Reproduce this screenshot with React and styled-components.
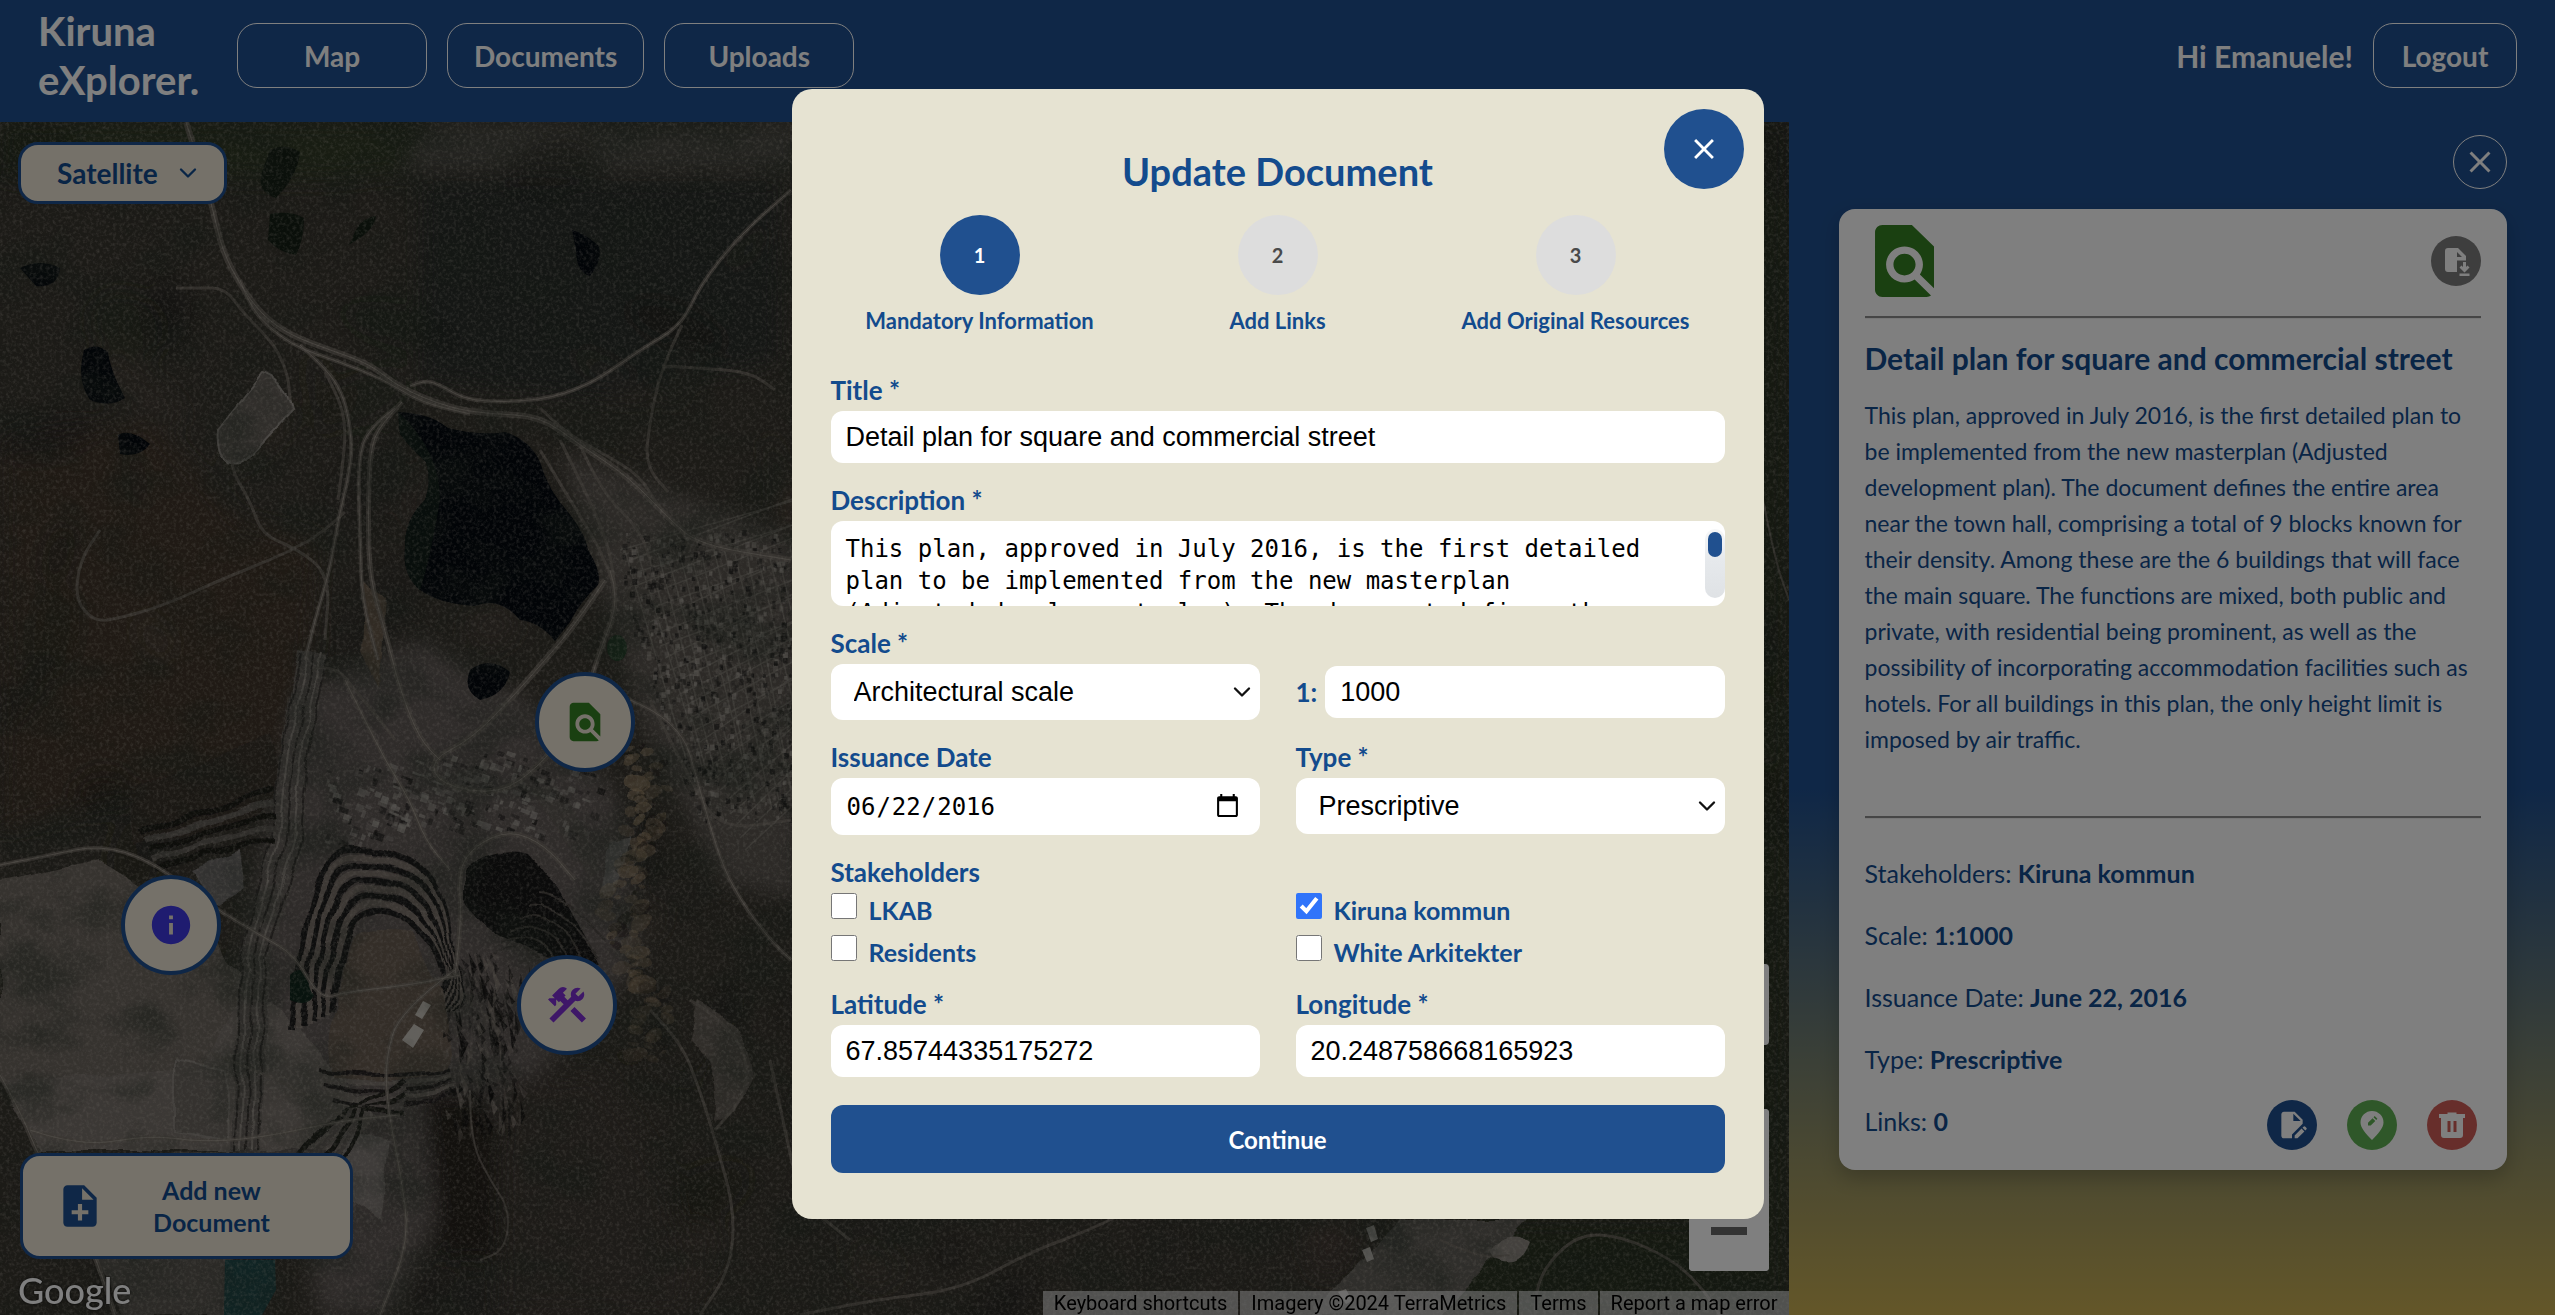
import React, { useState } from "react";
import styled, { createGlobalStyle } from "styled-components";
import {
  MdFindInPage,
  MdInfo,
  MdConstruction,
  MdNoteAdd,
  MdClose,
  MdEditDocument,
} from "react-icons/md";
import { ChevronDown } from "lucide-react";

const navy = "#1f4f8e";
const ink = "#134b8d";
const cream = "#e6e3d2";
const display = `Lato, "Liberation Sans", sans-serif`;

const GlobalStyle = createGlobalStyle`
  *, *::before, *::after { box-sizing: border-box; }
  html, body { margin: 0; height: 100%; }
  body {
    font-family: ${display};
    color: ${ink};
    overflow: hidden;
    background: linear-gradient(to bottom, #1f4f8e 60%, #c8ae52 100%);
  }
  button, input, textarea, select { font: inherit; color: inherit; }
  h1, h2, p, fieldset { margin: 0; }
`;

/* ---------- page frame ---------- */

const Page = styled.div`
  display: flex;
  flex-direction: column;
  height: 100vh;
`;

const Header = styled.header`
  flex: none;
  display: flex;
  align-items: center;
  gap: 20px;
  padding: 0 38px 11px;
  height: 122px;
  background: ${navy};
`;

const Logo = styled.a`
  width: 179px;
  color: #fff;
  font-size: 40px;
  font-weight: 700;
  line-height: 49px;
  text-decoration: none;
`;

const Nav = styled.nav`
  display: flex;
  gap: 20px;
  flex: 1;
`;

const PillButton = styled.button`
  min-width: ${(p) => (p.$compact ? "144px" : "190px")};
  height: 65px;
  padding: 0 26px;
  border: 1px solid #fff;
  border-radius: 20px;
  background: transparent;
  color: #fff;
  font-size: 28px;
  font-weight: 700;
`;

const Greeting = styled.span`
  color: #fff;
  font-size: 30px;
  font-weight: 700;
`;

const Main = styled.main`
  flex: 1;
  min-height: 0;
  display: flex;
`;

/* ---------- map ---------- */

const MapPane = styled.section`
  position: relative;
  flex: 0 0 70%;
  overflow: hidden;
  background: #34342f;
`;

const MapArt = styled.svg`
  display: block;
  width: 100%;
  height: 100%;
`;

const LayerButton = styled.button`
  position: absolute;
  left: 18px;
  top: 20px;
  display: flex;
  align-items: center;
  gap: 16px;
  height: 62px;
  padding: 0 22px 0 36px;
  border: 3px solid ${navy};
  border-radius: 20px;
  background: #ebe3d3;
  color: ${ink};
  font-size: 28px;
  font-weight: 700;
`;

const AddButton = styled.button`
  position: absolute;
  left: 20px;
  bottom: 56px;
  display: grid;
  grid-template-columns: 50px 1fr;
  align-items: center;
  width: 333px;
  height: 106px;
  padding: 0 58px 0 32px;
  border: 3px solid ${navy};
  border-radius: 20px;
  background: #ebe3d3;
  color: ${navy};
  font-size: 25px;
  font-weight: 700;
  line-height: 32px;
  text-align: center;

  span {
    padding-left: 26px;
    color: ${ink};
  }
`;

const Marker = styled.button`
  position: absolute;
  left: ${(p) => p.$x}px;
  top: ${(p) => p.$y}px;
  display: grid;
  place-items: center;
  width: 100px;
  height: 100px;
  padding: 0;
  border: 4px solid ${navy};
  border-radius: 50%;
  background: #ebe3d3;
  color: ${(p) => p.$color};
  transform: translate(-50%, -50%);
`;

const GoogleLink = styled.a`
  position: absolute;
  left: 18px;
  bottom: 4px;
  color: #fff;
  font-size: 36px;
  font-weight: 500;
  line-height: 42px;
  text-decoration: none;
  text-shadow: 0 0 3px rgba(0, 0, 0, 0.8);
`;

const MapControls = styled.div`
  position: absolute;
  right: 20px;
  bottom: 44px;
  display: grid;
  gap: 64px;
`;

const ControlBox = styled.div`
  width: 80px;
  border-radius: 4px;
  background: #fff;
  overflow: hidden;
`;

const ControlButton = styled.button`
  display: grid;
  place-items: center;
  width: 80px;
  height: 81px;
  padding: 0;
  border: 0;
  background: #fff;
  color: #666;
`;

const Attribution = styled.div`
  position: absolute;
  right: 0;
  bottom: 0;
  display: flex;
  gap: 2px;
  font-family: Roboto, "Liberation Sans", sans-serif;
  font-size: 20px;
  line-height: 24px;

  a {
    padding: 0 11px;
    background: rgba(245, 245, 245, 0.58);
    color: #000;
    text-decoration: none;
    white-space: nowrap;
  }
`;

/* ---------- document panel ---------- */

const Side = styled.aside`
  flex: 1;
  min-width: 0;
  padding: 13px 48px 0 50px;
`;

const SideTop = styled.div`
  display: flex;
  justify-content: flex-end;
  margin-bottom: 20px;
`;

const SideClose = styled.button`
  display: grid;
  place-items: center;
  width: 54px;
  height: 54px;
  padding: 0;
  border: 1px solid #fff;
  border-radius: 50%;
  background: transparent;
  color: #fff;
`;

const Card = styled.article`
  padding: 0 26px 18px;
  border-radius: 16px;
  background: #fff;
  box-shadow: 0 8px 20px rgba(0, 0, 0, 0.2);
`;

const CardHead = styled.div`
  display: flex;
  align-items: center;
  justify-content: space-between;
  padding: 16px 0 19px 10px;
`;

const TypeIcon = styled.svg`
  display: block;
  width: 59px;
  height: 72px;
  fill: #358022;
`;

const RoundButton = styled.button`
  display: grid;
  place-items: center;
  width: 50px;
  height: 50px;
  padding: 0;
  border: 0;
  border-radius: 50%;
  background: ${(p) => p.$bg};
  color: #fff;
`;

const Rule = styled.hr`
  margin: 0;
  border: 0;
  border-top: 2px solid #8c8c8c;
  border-bottom: 1px solid #eee;
`;

const CardTitle = styled.h2`
  margin: 22px 0;
  font-size: 30px;
  font-weight: 700;
  line-height: 34px;
`;

const Summary = styled.p`
  margin-bottom: 59px;
  font-size: 23px;
  line-height: 36px;
`;

const Facts = styled.div`
  padding-top: 23px;
  font-size: 25px;
  line-height: 62px;
`;

const FactRow = styled.div`
  display: flex;
  align-items: center;
  justify-content: space-between;
`;

const Actions = styled.div`
  display: flex;
  gap: 30px;
  padding: 8px 4px 0 0;
`;

/* ---------- dialog ---------- */

const Overlay = styled.div`
  position: fixed;
  inset: 0;
  display: flex;
  align-items: center;
  justify-content: center;
  padding-bottom: 7px;
  background: rgba(0, 0, 0, 0.5);
`;

const Dialog = styled.form`
  position: relative;
  width: 972px;
  max-width: 96vw;
  padding: 56px 39px 46px;
  border-radius: 20px;
  background: ${cream};
`;

const DialogClose = styled.button`
  position: absolute;
  right: 20px;
  top: 20px;
  display: grid;
  place-items: center;
  width: 80px;
  height: 80px;
  padding: 0;
  border: 0;
  border-radius: 50%;
  background: #20508f;
  color: #fff;
`;

const DialogTitle = styled.h1`
  font-size: 38px;
  font-weight: 700;
  line-height: 52px;
  text-align: center;
`;

const Steps = styled.div`
  display: grid;
  grid-template-columns: repeat(3, 1fr);
  margin: 18px 0 38px;
`;

const Step = styled.div`
  display: grid;
  justify-items: center;
  gap: 10px;
  font-size: 22px;
  font-weight: 700;
  line-height: 32px;
`;

const StepDot = styled.span`
  display: grid;
  place-items: center;
  width: 80px;
  height: 80px;
  border-radius: 50%;
  background: ${(p) => (p.$active ? "#20508f" : "#ddd")};
  color: ${(p) => (p.$active ? "#fff" : "#4a4a4a")};
  font-size: 20px;
`;

const Fields = styled.div`
  display: grid;
  grid-template-columns: 1fr 1fr;
  gap: 22px 36px;
`;

const Field = styled.div`
  grid-column: ${(p) => (p.$wide ? "1 / -1" : "auto")};
  display: flex;
  flex-direction: column;
  gap: 6px;
`;

const Label = styled.label`
  font-size: 26px;
  font-weight: 700;
  line-height: 30px;
`;

const TextInput = styled.input`
  width: 100%;
  min-width: 0;
  height: 52px;
  padding: 0 15px;
  border: 0;
  border-radius: 12px;
  background: #fff;
  color: #000;
  font-family: "Liberation Sans", Arial, sans-serif;
  font-size: 27px;
`;

const DateInput = styled(TextInput)`
  height: 57px;
  font-family: "DejaVu Sans Mono", monospace;
  font-size: 24px;

  &::-webkit-calendar-picker-indicator {
    width: 27px;
    height: 27px;
    margin-right: 2px;
  }
`;

const TextAreaWrap = styled.div`
  position: relative;
  height: 85px;
`;

const TextArea = styled.textarea`
  display: block;
  width: 100%;
  height: 85px;
  padding: 12px 78px 12px 15px;
  border: 0;
  border-radius: 12px;
  background: #fff;
  color: #000;
  font-family: "DejaVu Sans Mono", monospace;
  font-size: 24px;
  line-height: 32px;
  resize: none;
  scrollbar-width: none;
`;

const ScrollTrack = styled.span`
  position: absolute;
  right: 0;
  top: 8px;
  bottom: 8px;
  width: 20px;
  padding: 3px;
  border-radius: 10px;
  background: linear-gradient(to bottom, #f6f7f8, #e6e9ec 45%, #dfe2e5);
  pointer-events: none;
`;

const ScrollThumb = styled.span`
  display: block;
  height: 40%;
  border-radius: 8px;
  background: #20508f;
`;

const SelectWrap = styled.div`
  display: grid;
  align-items: center;

  > * {
    grid-area: 1 / 1;
  }
  > svg {
    justify-self: end;
    margin-right: 4px;
    color: #111;
    pointer-events: none;
  }
`;

const SelectBox = styled.select`
  appearance: none;
  width: 100%;
  height: 56px;
  padding: 0 23px;
  border: 0;
  border-radius: 12px;
  background: #fff;
  color: #000;
  font-family: "Liberation Sans", Arial, sans-serif;
  font-size: 27px;
`;

const RatioRow = styled.div`
  display: flex;
  align-items: center;
  gap: 8px;
  align-self: end;
  height: 56px;
`;

const Stakeholders = styled.fieldset`
  grid-column: 1 / -1;
  min-width: 0;
  padding: 0 0 2px;
  border: 0;

  legend {
    padding: 0;
    margin-bottom: 6px;
    font-size: 26px;
    font-weight: 700;
    line-height: 30px;
  }
`;

const CheckGrid = styled.div`
  display: grid;
  grid-template-columns: 1fr 1fr;
  gap: 12px 36px;
`;

const CheckItem = styled.label`
  display: flex;
  gap: 12px;
  height: 30px;
  font-size: 25px;
  font-weight: 700;
  line-height: 34px;

  input {
    width: 26px;
    height: 26px;
    margin: 0;
    accent-color: #3074fa;
  }
`;

const Submit = styled.button`
  display: block;
  width: 100%;
  height: 68px;
  margin-top: 28px;
  border: 0;
  border-radius: 12px;
  background: #20508f;
  color: #fff;
  font-size: 24px;
  font-weight: 700;
`;

/* ---------- map drawing ---------- */

function rng(seed) {
  let s = seed;
  return () => {
    s = (s * 16807) % 2147483647;
    return s / 2147483647;
  };
}

const smooth = (pts) => {
  let d = `M${pts[0][0]} ${pts[0][1]}`;
  for (let i = 1; i < pts.length - 1; i++) {
    const mx = (pts[i][0] + pts[i + 1][0]) / 2;
    const my = (pts[i][1] + pts[i + 1][1]) / 2;
    d += `Q${pts[i][0]} ${pts[i][1]} ${mx} ${my}`;
  }
  const last = pts[pts.length - 1];
  return d + `L${last[0]} ${last[1]}`;
};

const roads = [
  { w: 6, pts: [[186, 122], [198, 160], [212, 205], [222, 250], [240, 285], [262, 315], [290, 335], [330, 350], [370, 364], [400, 388], [450, 408], [490, 414], [540, 416], [580, 445], [630, 478], [670, 520], [700, 545], [791, 560]] },
  { w: 4, pts: [[240, 280], [250, 310], [290, 345], [340, 362], [385, 380], [420, 402], [470, 414]] },
  { w: 4, pts: [[410, 386], [425, 380], [440, 385], [470, 402], [540, 401], [590, 385], [640, 350], [682, 325], [700, 285], [740, 235], [791, 190]] },
  { w: 3, pts: [[682, 325], [662, 366], [650, 420], [645, 465], [668, 492]] },
  { w: 3, pts: [[662, 366], [700, 368], [750, 372], [775, 390]] },
  { w: 3, pts: [[540, 408], [562, 430], [600, 452], [640, 475], [660, 510], [690, 540]] },
  { w: 3, pts: [[176, 288], [200, 288], [225, 288], [245, 315], [275, 345], [288, 375], [290, 400]] },
  { w: 4, pts: [[300, 345], [330, 372], [345, 400], [352, 440], [350, 470], [338, 520], [330, 570], [315, 620], [305, 660]] },
  { w: 3, pts: [[325, 372], [340, 400], [346, 430], [342, 470], [338, 500]] },
  { w: 5, pts: [[402, 402], [380, 425], [370, 450], [368, 520], [370, 580], [385, 630], [400, 690], [420, 740], [440, 760]] },
  { w: 4, pts: [[395, 408], [368, 428], [358, 460], [360, 540], [362, 600], [378, 660]] },
  { w: 3, pts: [[232, 430], [228, 465], [250, 500], [262, 535], [296, 548], [330, 575], [325, 640]] },
  { w: 3, pts: [[296, 548], [270, 560], [220, 580], [165, 605], [120, 618], [95, 622], [75, 600], [80, 560], [100, 530]] },
  { w: 3, pts: [[345, 512], [320, 535], [290, 550]] },
  { w: 3, pts: [[540, 450], [570, 500], [598, 545], [612, 580]] },
  { w: 3, pts: [[560, 440], [590, 500], [610, 550], [615, 590]] },
  { w: 3, pts: [[580, 445], [600, 490], [640, 530], [650, 560]] },
  { w: 3, pts: [[312, 668], [335, 665], [355, 690], [380, 720], [395, 740]] },
  { w: 4, pts: [[345, 680], [365, 720], [385, 760], [410, 800], [425, 840], [450, 870]] },
  { w: 6, pts: [[605, 580], [575, 625], [545, 660], [510, 700], [470, 740], [430, 760], [440, 785], [500, 795], [540, 765], [560, 740]] },
  { w: 5, pts: [[610, 570], [620, 600], [600, 650], [588, 690]] },
  { w: 4, pts: [[0, 865], [50, 855], [100, 845], [150, 860], [210, 905], [260, 935], [295, 955], [320, 1000], [345, 992], [410, 985], [460, 975]] },
  { w: 3, pts: [[107, 915], [107, 1000], [170, 1040], [230, 1060], [290, 1085], [350, 1120]] },
  { w: 5, pts: [[0, 1075], [20, 1110], [40, 1160], [90, 1240], [115, 1315]] },
  { w: 4, pts: [[30, 1130], [80, 1147], [150, 1135], [200, 1142], [260, 1138], [345, 1120], [400, 1115]] },
  { w: 4, pts: [[455, 970], [400, 1010], [385, 1060], [388, 1110], [400, 1170], [410, 1240], [380, 1315]] },
  { w: 2, pts: [[470, 1090], [470, 1140], [490, 1180], [510, 1210], [505, 1250], [480, 1260]] },
  { w: 5, pts: [[455, 975], [462, 920], [458, 870], [475, 845], [510, 830], [545, 845], [575, 880]] },
  { w: 4, pts: [[630, 700], [680, 720], [700, 790], [720, 860], [740, 900], [770, 940], [791, 960]] },
  { w: 3, pts: [[650, 700], [690, 780], [720, 830], [791, 820]] },
  { w: 3, pts: [[650, 1010], [680, 1040], [700, 1090], [715, 1140], [735, 1210], [730, 1270], [700, 1315]] },
  { w: 3, pts: [[690, 1000], [740, 1030], [750, 1090], [715, 1130]] },
  { w: 3, pts: [[770, 1060], [785, 1130], [800, 1200], [850, 1240]] },
  { w: 3, pts: [[800, 1315], [870, 1300], [960, 1290], [1030, 1252], [1090, 1230], [1150, 1200]] },
  { w: 3, pts: [[1535, 1315], [1535, 1290], [1550, 1260], [1580, 1234], [1620, 1236], [1670, 1258], [1700, 1285], [1720, 1315]] },
  { w: 2, pts: [[1440, 1240], [1480, 1258], [1510, 1255]] },
  { w: 2, pts: [[1763, 500], [1775, 560], [1789, 600]] },
];

const lakes = [
  "M398 412Q430 413 448 428Q480 436 505 432Q530 440 540 462Q548 490 568 512Q586 535 588 550Q602 572 598 585Q580 602 570 622L555 641Q540 622 520 620Q500 596 475 606Q440 604 420 590Q402 575 405 548Q404 520 425 500Q432 480 426 462Q412 450 400 434Z",
  "M270 150Q285 142 300 152Q298 175 276 198Q256 192 262 172Z",
  "M270 214Q290 210 304 218Q304 240 296 255Q278 252 268 240Z",
  "M352 240Q358 218 376 216Q374 232 348 245Z",
  "M572 230Q582 232 598 245Q604 258 590 276Q576 272 576 250Z",
  "M84 350Q96 342 108 352Q110 370 125 398Q110 408 90 400Q76 380 84 350Z",
  "M118 435Q130 428 150 444Q140 458 120 454Z",
  "M20 268Q40 258 60 268Q58 288 36 286Z",
  "M290 975Q300 965 308 975Q308 990 314 995Q308 1008 290 1000Z",
  "M470 670Q490 655 510 672Q505 695 480 700Q462 690 470 670Z",
];

function SatelliteMap() {
  const r = rng(4217);
  const blotches = Array.from({ length: 170 }, () => ({
    x: r() * 1789,
    y: 122 + r() * 1193,
    rx: 8 + r() * 55,
    ry: 5 + r() * 30,
    a: r() * 180,
    c: ["#1c1c1a", "#4b4038", "#2a3026", "#54473c", "#20241f"][Math.floor(r() * 5)],
    o: 0.15 + r() * 0.35,
  }));
  const streets = [];
  for (let i = 0; i < 26; i++) {
    const y = 530 + i * 12;
    streets.push(`M${620 + i * 5} ${y + 20}L${800} ${y - 50 + r() * 20}`);
  }
  for (let i = 0; i < 20; i++) {
    const x = 625 + i * 11;
    streets.push(`M${x} ${540 + r() * 20}L${x + 50 + r() * 20} ${760 + i * 6}`);
  }
  const houses = Array.from({ length: 900 }, () => {
    const t = r();
    return { x: 622 + r() * 168, y: 530 + t * 290, s: 2 + r() * 3, o: 0.25 + r() * 0.5 };
  }).filter((h) => h.x > 600 + (h.y - 540) * 0.35);
  const industrial = Array.from({ length: 260 }, () => {
    const t = r();
    return { x: 310 + t * 260 + r() * 40, y: 770 + r() * 75 - Math.sin(t * 3) * 20, w: 2 + r() * 8, h: 2 + r() * 6, o: 0.25 + r() * 0.5 };
  });
  const plume = Array.from({ length: 110 }, (_, i) => {
    const t = i / 110;
    return { x: 636 + Math.sin(t * 9) * 12 + (r() - 0.5) * 40, y: 745 + t * 320, q: 3 + r() * 10, o: (0.7 - t * 0.4) * (0.5 + r() * 0.5) };
  });
  const crags = Array.from({ length: 190 }, () => ({
    x: 455 + r() * 60 + (r() - 0.5) * 40,
    y: 950 + r() * 170,
    w: 2 + r() * 8,
    h: 4 + r() * 16,
    o: 0.3 + r() * 0.5,
  }));

  return (
    <MapArt viewBox="0 122 1789 1193" preserveAspectRatio="xMinYMin slice" aria-hidden="true">
      <defs>
        <filter id="grain" x="0" y="0" width="100%" height="100%">
          <feTurbulence type="fractalNoise" baseFrequency="0.3" numOctaves="3" seed="8" />
          <feColorMatrix values="0 0 0 0 0.62  0 0 0 0 0.57  0 0 0 0 0.5  0 1.5 0 0 -0.66" />
        </filter>
        <filter id="mottle" x="0" y="0" width="100%" height="100%">
          <feTurbulence type="fractalNoise" baseFrequency="0.014 0.02" numOctaves="6" seed="21" />
          <feColorMatrix values="0 0 0 0 0.02  0 0 0 0 0.03  0 0 0 0 0.02  0 0 3 0 -1.3" />
        </filter>
        <filter id="warp" x="-5%" y="-5%" width="110%" height="110%">
          <feTurbulence type="fractalNoise" baseFrequency="0.025" numOctaves="2" seed="5" result="n" />
          <feDisplacementMap in="SourceGraphic" in2="n" scale="12" xChannelSelector="R" yChannelSelector="G" />
        </filter>
        <filter id="soft"><feGaussianBlur stdDeviation="10" /></filter>
      </defs>
      <rect y="122" width="1789" height="1193" fill="#39362f" />
      <g filter="url(#soft)">
        <path d="M0 122H430L400 172L330 180L0 175Z" fill="#303a25" />
        <path d="M430 122H800V170H400Z" fill="#4a4843" />
        <path d="M420 180H780V360L600 400L420 380Z" fill="#2c2e2b" />
        <path d="M0 440L150 420L240 520L320 540L300 760L0 830Z" fill="#40362c" />
        <path d="M1690 122H1789V1315H1400L1450 1219H1700Z" fill="#2b3123" />
        {blotches.map((b, i) => (
          <ellipse key={i} cx={b.x} cy={b.y} rx={b.rx} ry={b.ry} fill={b.c} opacity={b.o} transform={`rotate(${b.a} ${b.x} ${b.y})`} />
        ))}
        <path d="M300 690L420 640L560 720L620 800L640 960L580 1030L470 1140L390 1315H320L300 1200L230 1160L250 900Z" fill="#5e5955" />
        <path d="M560 450L800 540V900L720 880L640 720Z" fill="#5a554f" />
        <path d="M500 1080L600 1070L670 1180L690 1315H500Z" fill="#3c3733" />
        <path d="M420 1090L490 1090L500 1260H440Z" fill="#25231f" />
      </g>
      <g filter="url(#warp)">
        <path d="M0 940L110 900L190 930L300 1030L380 1120L330 1150L40 1150L0 1080Z" fill="#77706a" />
        <path d="M0 880L100 860L215 930L240 1000L200 1070L0 1080Z" fill="#6d665f" />
        <path d="M135 790L270 735L285 790L250 820L130 845Z" fill="#38302a" />
        <path d="M190 870L240 850L245 890L220 905Z" fill="#747170" />
        <path d="M60 1160L230 1150L240 1315H120Z" fill="#59544f" />
        <path d="M340 1130L390 1140L380 1220L340 1190Z" fill="#7f7974" />
        <path d="M175 1060L225 1070L228 1140L175 1130Z" fill="#6a655f" stroke="#86807a" strokeWidth="2" />
        <path d="M218 430L262 375Q285 380 292 410L240 465Q215 470 218 430Z" fill="#67625c" stroke="#96908a" strokeWidth="2" />
        <path d="M312 655Q290 760 287 840Q272 900 254 960L246 1150" stroke="#625d58" strokeWidth="30" fill="none" />
        {[0, 1, 2, 3, 4].map((i) => (
          <path key={i} d={`M${300 + i * 7} 655Q${276 + i * 7} 760 ${272 + i * 7} 840Q${256 + i * 7} 900 ${240 + i * 6} 960L${235 + i * 6} 1150`} stroke={i % 2 ? "#8a847d" : "#383430"} strokeWidth="2" fill="none" />
        ))}
        {[0, 1, 2, 3, 4].map((i) => (
          <path key={i} d={`M${140 + i * 4} ${833 + i * 9}Q220 ${805 + i * 10} 275 ${790 + i * 13}`} stroke={i % 2 ? "#615b56" : "#1c1a19"} strokeWidth="6" fill="none" />
        ))}
        {Array.from({ length: 9 }, (_, i) => (
          <path
            key={i}
            d={`M${292 + i * 5} ${1030 - i * 2}C${300 + i * 5} ${960} ${312 + i * 4} ${848 + i * 9} ${350 + i * 2} ${848 + i * 8}S${440 - i * 3} ${855 + i * 8} ${448 - i * 2} ${930 + i * 2}S${468 - i * 3} ${985} ${452 - i * 2} ${1010}`}
            stroke={i % 2 ? "#797069" : "#1f1d1c"}
            strokeWidth="6"
            fill="none"
          />
        ))}
        <path d="M335 1080Q322 1040 338 1010Q340 970 350 940Q360 925 415 932Q425 975 442 990Q460 1040 445 1072Q390 1085 335 1080Z" fill="#675b51" />
        {[0, 1, 2, 3, 4].map((i) => (
          <path key={i} d={`M${318 + i * 4} ${1070 + i * 7}Q385 ${1080 + i * 9} ${450 + i * 2} ${1070 + i * 6}`} stroke={i % 2 ? "#7a736c" : "#262321"} strokeWidth="4" fill="none" />
        ))}
        {[0, 1, 2, 3, 4].map((i) => (
          <path key={i} d={`M${285 + i * 10} ${1180 + i * 4}Q${310 + i * 8} ${1135 + i * 6} ${345 + i * 5} ${1110}Q${380 + i * 4} ${1100 + i * 4} 405 ${1080 + i * 8}`} stroke={i % 2 ? "#6b645e" : "#23211f"} strokeWidth="5" fill="none" />
        ))}
        <path d="M465 870Q490 845 530 855L560 890L600 965Q560 970 520 945Q480 930 465 900Z" fill="#191817" />
        {[0, 1, 2, 3, 4, 5].map((i) => (
          <path key={i} d={`M${490 + i * 10} ${955 - i * 12}Q${540 + i * 6} ${925 - i * 6} ${582 + i * 4} ${1030 - i * 18}`} stroke="#4d4844" strokeWidth="2" fill="none" />
        ))}
        <path d="M530 790L560 785L600 870L590 880Z" fill="#5d5853" />
        <path d="M612 840L630 835L615 890L600 895Z" fill="#75736f" />
        <path d="M700 1000Q745 1020 752 1080Q735 1120 715 1120Q725 1070 690 1040Z" fill="#625b54" />
        <path d="M365 580L385 600L378 690L362 650Z" fill="#675a4c" />
        <path d="M1310 1315L1400 1219H1530L1440 1315Z" fill="#5e5c56" />
        <path d="M1490 1250Q1510 1228 1530 1242Q1520 1270 1495 1258Z" fill="#88837c" />
      </g>
      {crags.map((c, i) => (
        <path key={i} d={`M${c.x} ${c.y}l${c.w} ${c.h}l-4 ${c.h / 2}z`} fill={i % 3 ? "#121110" : "#837a72"} opacity={c.o} />
      ))}
      {industrial.map((b, i) => (
        <rect key={i} x={b.x} y={b.y} width={b.w} height={b.h} fill={i % 3 ? "#a5a19a" : "#1b1a19"} opacity={b.o} transform={`rotate(20 ${b.x} ${b.y})`} />
      ))}
      <path d={streets.join("")} stroke="#8b867d" strokeWidth="1.5" fill="none" opacity="0.55" />
      {houses.map((h, i) => (
        <rect key={i} x={h.x} y={h.y} width={h.s} height={h.s + 1} fill={i % 2 ? "#a09b93" : "#191918"} opacity={h.o} />
      ))}
      <g filter="url(#warp)">
        {plume.map((p, i) => (
          <ellipse key={i} cx={p.x} cy={p.y} rx={p.q} ry={p.q * 0.6} fill={i % 3 ? "#a38c6e" : "#241f1a"} opacity={p.o} transform={`rotate(${-40 + (i % 5) * 15} ${p.x} ${p.y})`} />
        ))}
      </g>
      {lakes.map((d, i) => (
        <path key={i} d={d} fill={i === 8 ? "#10261c" : i > 0 && i < 4 ? "#151f15" : "#04090f"} />
      ))}
      <path d="M398 412L400 434Q412 450 426 462Q432 480 425 500Q404 520 405 548Q402 575 420 590Q430 560 440 500Q440 450 398 412Z" fill="#111d18" />
      <ellipse cx="617" cy="648" rx="10" ry="13" fill="#27452d" />
      <path d="M225 1260H275L276 1290L262 1315H224Z" fill="#224a4a" />
      {roads.map((road, i) => (
        <path key={i} d={smooth(road.pts)} stroke="#756f67" strokeWidth={road.w} fill="none" opacity="0.75" />
      ))}
      {roads.filter((road) => road.w > 3).map((road, i) => (
        <path key={i} d={smooth(road.pts)} stroke="#a39b92" strokeWidth="1" fill="none" opacity="0.7" />
      ))}
      <path d="M415 1015l8-14 8 4-9 14zM402 1040l12-16 10 6-11 18z" fill="#c4c0b8" />
      <path d="M1338 1292l8-3 6 12-6 3zM1362 1250l8-3 4 12-7 3zM1366 1228l8-3 4 14-7 3z" fill="#bfbcb6" />
      <rect y="122" width="1789" height="1193" filter="url(#mottle)" opacity="0.42" />
      <rect y="122" width="1789" height="1193" filter="url(#grain)" opacity="0.45" />
    </MapArt>
  );
}

/* ---------- small icons ---------- */

const FileDownload = () => (
  <svg width="34" height="34" viewBox="0 0 34 34" fill="currentColor" aria-hidden="true">
    <path d="M9 4h10l8 8v4.500h-9V28H9a3 3 0 0 1-3-3V7a3 3 0 0 1 3-3zm9 4v5h5z" fillRule="evenodd" />
    <path d="M24 18h3v5l1.500-1.500 2 2-5 5-5-5 2-2L24 23zM20.500 29.500h10V32h-10z" />
  </svg>
);

const PinEdit = () => (
  <svg width="30" height="34" viewBox="0 0 30 34" fill="none" aria-hidden="true">
    <path d="M15 32C9 26 3.500 20 3.500 14.500a11.500 11.500 0 0 1 23 0C26.500 20 21 26 15 32z" fill="#fff" />
    <path d="M11 17.500v-2.700l4.600-4.600 2.700 2.700-4.600 4.600zM16.500 9.300l1.200-1.200 2.700 2.700-1.200 1.200z" fill="#5faf52" />
  </svg>
);

const Trash = () => (
  <svg width="30" height="32" viewBox="0 0 30 32" aria-hidden="true">
    <path
      d="M10.500 3.500h9v1.500H28v4h-2V26a3 3 0 0 1-3 3H7a3 3 0 0 1-3-3V9H2V5h8.500zM10.500 12v11h3V12zm6 0v11h3V12z"
      fill="#fff"
      fillRule="evenodd"
    />
  </svg>
);

/* ---------- app ---------- */

const description =
  "This plan, approved in July 2016, is the first detailed plan to be implemented from the new masterplan (Adjusted development plan). The document defines the entire area near the town hall, comprising a total of 9 blocks known for their density. Among these are the 6 buildings that will face the main square. The functions are mixed, both public and private, with residential being prominent, as well as the possibility of incorporating accommodation facilities such as hotels. For all buildings in this plan, the only height limit is imposed by air traffic.";

const title = "Detail plan for square and commercial street";

const facts = [
  ["Stakeholders", "Kiruna kommun"],
  ["Scale", "1:1000"],
  ["Issuance Date", "June 22, 2016"],
  ["Type", "Prescriptive"],
];

const steps = ["Mandatory Information", "Add Links", "Add Original Resources"];

export default function App() {
  const [holders, setHolders] = useState({
    LKAB: false,
    "Kiruna kommun": true,
    Residents: false,
    "White Arkitekter": false,
  });

  return (
    <>
      <GlobalStyle />
      <Page>
        <Header>
          <Logo href="#home">Kiruna eXplorer.</Logo>
          <Nav>
            <PillButton>Map</PillButton>
            <PillButton>Documents</PillButton>
            <PillButton>Uploads</PillButton>
          </Nav>
          <Greeting>Hi Emanuele!</Greeting>
          <PillButton $compact>Logout</PillButton>
        </Header>
        <Main>
          <MapPane aria-label="Map">
            <SatelliteMap />
            <LayerButton>
              Satellite <ChevronDown size={28} strokeWidth={2} />
            </LayerButton>
            <Marker $x={585} $y={600} $color="#358022" aria-label="Detail plan">
              <MdFindInPage size={46} />
            </Marker>
            <Marker $x={171} $y={803} $color="#3f38e0" aria-label="Information">
              <MdInfo size={46} />
            </Marker>
            <Marker $x={567} $y={883} $color="#7c2fd0" aria-label="Construction">
              <MdConstruction size={46} />
            </Marker>
            <AddButton>
              <MdNoteAdd size={50} />
              <span>Add new Document</span>
            </AddButton>
            <GoogleLink href="#google">Google</GoogleLink>
            <MapControls>
              <ControlBox>
                <ControlButton aria-label="Fullscreen" />
              </ControlBox>
              <ControlBox>
                <ControlButton aria-label="Zoom in" />
                <ControlButton aria-label="Zoom out">
                  <svg width="36" height="8" aria-hidden="true">
                    <rect width="36" height="8" fill="currentColor" />
                  </svg>
                </ControlButton>
              </ControlBox>
            </MapControls>
            <Attribution>
              <a href="#shortcuts">Keyboard shortcuts</a>
              <a href="#imagery">Imagery ©2024 TerraMetrics</a>
              <a href="#terms">Terms</a>
              <a href="#report">Report a map error</a>
            </Attribution>
          </MapPane>
          <Side>
            <SideTop>
              <SideClose aria-label="Close panel">
                <MdClose size={36} />
              </SideClose>
            </SideTop>
            <Card>
              <CardHead>
                <TypeIcon viewBox="4 2 16 20" preserveAspectRatio="none" aria-hidden="true">
                  <path d="M20 19.590V8l-6-6H6c-1.100 0-1.990.9-1.990 2L4 20c0 1.100.890 2 1.990 2H18c.450 0 .850-.150 1.190-.4l-4.430-4.430c-.8.520-1.740.830-2.760.830-2.760 0-5-2.240-5-5s2.240-5 5-5 5 2.240 5 5c0 1.020-.310 1.960-.830 2.750L20 19.590zM9 13c0 1.660 1.340 3 3 3s3-1.340 3-3-1.340-3-3-3-3 1.340-3 3z" />
                </TypeIcon>
                <RoundButton $bg="#7d7d7d" aria-label="Download">
                  <FileDownload />
                </RoundButton>
              </CardHead>
              <Rule />
              <CardTitle>{title}</CardTitle>
              <Summary>{description}</Summary>
              <Rule />
              <Facts>
                {facts.map(([k, v]) => (
                  <FactRow key={k}>
                    <span>
                      {k}: <b>{v}</b>
                    </span>
                  </FactRow>
                ))}
                <FactRow>
                  <span>
                    Links: <b>0</b>
                  </span>
                  <Actions>
                    <RoundButton $bg="#1f4f8e" aria-label="Edit document">
                      <MdEditDocument size={32} />
                    </RoundButton>
                    <RoundButton $bg="#5faf52" aria-label="Edit location">
                      <PinEdit />
                    </RoundButton>
                    <RoundButton $bg="#cf5c57" aria-label="Delete document">
                      <Trash />
                    </RoundButton>
                  </Actions>
                </FactRow>
              </Facts>
            </Card>
          </Side>
        </Main>
      </Page>

      <Overlay>
        <Dialog role="dialog" aria-label="Update Document" onSubmit={(e) => e.preventDefault()}>
          <DialogClose type="button" aria-label="Close">
            <MdClose size={34} />
          </DialogClose>
          <DialogTitle>Update Document</DialogTitle>
          <Steps>
            {steps.map((s, i) => (
              <Step key={s}>
                <StepDot $active={i === 0}>{i + 1}</StepDot>
                {s}
              </Step>
            ))}
          </Steps>
          <Fields>
            <Field $wide>
              <Label htmlFor="title">Title *</Label>
              <TextInput id="title" defaultValue={title} />
            </Field>
            <Field $wide>
              <Label htmlFor="description">Description *</Label>
              <TextAreaWrap>
                <TextArea id="description" defaultValue={description} />
                <ScrollTrack aria-hidden="true">
                  <ScrollThumb />
                </ScrollTrack>
              </TextAreaWrap>
            </Field>
            <Field>
              <Label htmlFor="scale">Scale *</Label>
              <SelectWrap>
                <SelectBox id="scale" defaultValue="Architectural scale">
                  <option>Architectural scale</option>
                </SelectBox>
                <ChevronDown size={28} strokeWidth={2} />
              </SelectWrap>
            </Field>
            <RatioRow>
              <Label htmlFor="ratio">1:</Label>
              <TextInput id="ratio" defaultValue="1000" />
            </RatioRow>
            <Field>
              <Label htmlFor="date">Issuance Date</Label>
              <DateInput id="date" type="date" defaultValue="2016-06-22" />
            </Field>
            <Field>
              <Label htmlFor="type">Type *</Label>
              <SelectWrap>
                <SelectBox id="type" defaultValue="Prescriptive">
                  <option>Prescriptive</option>
                </SelectBox>
                <ChevronDown size={28} strokeWidth={2} />
              </SelectWrap>
            </Field>
            <Stakeholders>
              <legend>Stakeholders</legend>
              <CheckGrid>
                {Object.keys(holders).map((name) => (
                  <CheckItem key={name}>
                    <input
                      type="checkbox"
                      checked={holders[name]}
                      onChange={() => setHolders({ ...holders, [name]: !holders[name] })}
                    />
                    {name}
                  </CheckItem>
                ))}
              </CheckGrid>
            </Stakeholders>
            <Field>
              <Label htmlFor="lat">Latitude *</Label>
              <TextInput id="lat" defaultValue="67.85744335175272" />
            </Field>
            <Field>
              <Label htmlFor="lng">Longitude *</Label>
              <TextInput id="lng" defaultValue="20.248758668165923" />
            </Field>
          </Fields>
          <Submit type="submit">Continue</Submit>
        </Dialog>
      </Overlay>
    </>
  );
}
